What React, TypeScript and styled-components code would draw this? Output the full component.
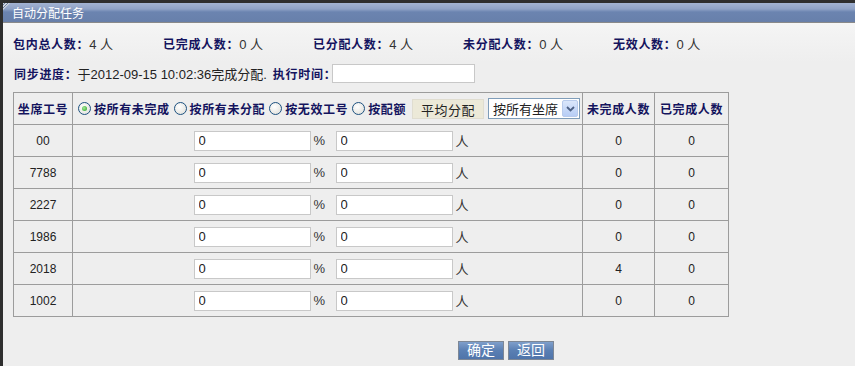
import React from "react";
import styled, { createGlobalStyle } from "styled-components";

const Global = createGlobalStyle`
  html, body { margin: 0; padding: 0; background: #2e2e2e; }
  body { font-family: "Liberation Sans", "Noto Sans CJK SC", sans-serif; font-size: 12px; color: #222; }
  * { box-sizing: border-box; }
`;

const Frame = styled.div`
  width: 855px;
  height: 366px;
  padding: 3px 0 0 3px;
  background: #2e2e2e;
  overflow: hidden;
`;

const Dialog = styled.div`
  height: 363px;
  display: flex;
  flex-direction: column;
  background: linear-gradient(#fcfcfc 0px, #f3f3f3 30px, #eeeeee 60px, #eeeeee 100%);
`;

const TitleBar = styled.div`
  position: relative;
  height: 20px;
  flex: none;
  display: flex;
  align-items: center;
  padding-left: 9px;
  color: #fff;
  font-size: 12px;
  background: linear-gradient(#a3b3d2 0px, #8fa2c6 6px, #6b84b0 9px, #6880ab 18px, #6b7fa3 20px);
  border-bottom: 1px solid #8a8a8a;
  &::before {
    content: "";
    position: absolute;
    left: 0;
    top: 0;
    width: 7px;
    height: 7px;
    background: repeating-linear-gradient(135deg, #d0d6e0 0 1px, #6e7f9e 1px 2px);
    clip-path: polygon(0 0, 100% 0, 0 100%);
  }
`;

const Body = styled.div`
  padding: 0 0 0 10px;
  display: flex;
  flex-direction: column;
`;

const StatRow = styled.div`
  display: flex;
  height: 38px;
  align-items: center;
  padding-top: 2px;
`;

const Stat = styled.div`
  width: 150px;
  flex: none;
  white-space: nowrap;
  font-size: 13px;
  color: #333;
`;

const Label = styled.span`
  font-weight: bold;
  font-size: 12px;
  letter-spacing: 0.7px;
  color: #14145e;
`;

const SyncRow = styled.div`
  display: flex;
  align-items: center;
  height: 24px;
  white-space: nowrap;
  font-size: 13px;
  color: #222;
`;

const SyncLabel = styled(Label)`
  margin-left: 1px;
`;

const TimeLabel = styled(Label)`
  margin-left: 6px;
`;

const TimeInput = styled.input`
  width: 143px;
  height: 19px;
  margin-left: -4px;
  border: 1px solid #c8c8c8;
  background: #fff;
  padding: 0 3px;
  font: inherit;
`;

const Grid = styled.table`
  margin-top: 7px;
  border-collapse: collapse;
  width: 715px;
  table-layout: fixed;
  font-size: 12px;
`;

const Th = styled.th<{ $align?: string }>`
  height: 32px;
  border: 1px solid #9c9c9c;
  font-weight: bold;
  letter-spacing: 0.6px;
  color: #14145e;
  text-align: ${(p) => p.$align || "center"};
  padding: 0 1px;
  white-space: nowrap;
`;

const Td = styled.td`
  height: 32px;
  border: 1px solid #9c9c9c;
  text-align: center;
  color: #222;
  padding: 0;
`;

const Controls = styled.div`
  display: flex;
  align-items: center;
  padding-left: 1px;
`;

const Radio = styled.span<{ $checked?: boolean }>`
  width: 13px;
  height: 13px;
  border-radius: 50%;
  border: 1px solid #1c5180;
  background: radial-gradient(circle at 40% 35%, #ffffff, #dcdcd6);
  display: inline-flex;
  align-items: center;
  justify-content: center;
  margin-right: 3px;
  margin-left: 3px;
  flex: none;
  &::after {
    content: "";
    width: 5px;
    height: 5px;
    border-radius: 50%;
    background: ${(p) => (p.$checked ? "radial-gradient(circle at 40% 40%, #a6e89a, #21a121)" : "transparent")};
  }
`;

const RadioText = styled.span`
  margin-right: 1px;
`;

const AvgButton = styled.button`
  margin-left: 5px;
  width: 72px;
  height: 20px;
  border: 1px solid #e0ddd0;
  background: #ece9d8;
  font: inherit;
  font-weight: normal;
  letter-spacing: 0.5px;
  font-size: 13px;
  color: #222;
  padding: 0;
`;

const SelectBox = styled.div`
  margin-left: 4px;
  width: 92px;
  height: 21px;
  border: 1px solid #7f9db9;
  background: #fff;
  display: flex;
  align-items: center;
  font-weight: normal;
  font-size: 13px;
  letter-spacing: 0;
  color: #222;
  padding-left: 4px;
`;

const SelectText = styled.span`
  flex: 1;
  text-align: left;
`;

const Arrow = styled.span`
  width: 16px;
  height: 17px;
  margin-right: 1px;
  background: linear-gradient(#dbe7fb, #b7cdf5);
  border: 1px solid #b8cbec;
  border-radius: 2px;
  display: flex;
  align-items: center;
  justify-content: center;
`;

const AllocCell = styled.div`
  display: flex;
  align-items: center;
  justify-content: center;
  padding-left: 7px;
`;

const NumInput = styled.input`
  width: 117px;
  height: 20px;
  border: 1px solid #c8c8c8;
  background: #fff;
  padding: 0 4px;
  font: inherit;
  font-size: 13px;
  color: #222;
`;

const Unit = styled.span<{ $w: number }>`
  width: ${(p) => p.$w}px;
  text-align: left;
  padding-left: 3px;
  font-size: 13px;
  color: #333;
`;

const Footer = styled.div`
  display: flex;
  gap: 4px;
  padding-left: 445px;
  margin-top: 24px;
`;

const BlueButton = styled.button`
  width: 46px;
  height: 19px;
  border: 1px solid #7d8795;
  background: linear-gradient(#7f9fcb, #5a7fb3 50%, #4f74aa);
  color: #fff;
  font: inherit;
  font-size: 14px;
  padding: 0;
  line-height: 17px;
`;

const rows = [
  { id: "00", un: 0, done: 0 },
  { id: "7788", un: 0, done: 0 },
  { id: "2227", un: 0, done: 0 },
  { id: "1986", un: 0, done: 0 },
  { id: "2018", un: 4, done: 0 },
  { id: "1002", un: 0, done: 0 },
];

export default function App() {
  return (
    <Frame>
      <Global />
      <Dialog>
        <TitleBar>自动分配任务</TitleBar>
        <Body>
          <StatRow>
            <Stat><Label>包内总人数：</Label>4 人</Stat>
            <Stat><Label>已完成人数：</Label>0 人</Stat>
            <Stat><Label>已分配人数：</Label>4 人</Stat>
            <Stat><Label>未分配人数：</Label>0 人</Stat>
            <Stat><Label>无效人数：</Label>0 人</Stat>
          </StatRow>
          <SyncRow>
            <SyncLabel>同步进度：</SyncLabel>
            <span>于2012-09-15 10:02:36完成分配.</span>
            <TimeLabel>执行时间：</TimeLabel>
            <TimeInput defaultValue="" />
          </SyncRow>
          <Grid>
            <colgroup>
              <col style={{ width: 59 }} />
              <col style={{ width: 510 }} />
              <col style={{ width: 72 }} />
              <col style={{ width: 74 }} />
            </colgroup>
            <thead>
              <tr>
                <Th>坐席工号</Th>
                <Th $align="left">
                  <Controls>
                    <Radio $checked />
                    <RadioText>按所有未完成</RadioText>
                    <Radio />
                    <RadioText>按所有未分配</RadioText>
                    <Radio />
                    <RadioText>按无效工号</RadioText>
                    <Radio />
                    <RadioText>按配额</RadioText>
                    <AvgButton>平均分配</AvgButton>
                    <SelectBox>
                      <SelectText>按所有坐席</SelectText>
                      <Arrow>
                        <svg width="9" height="6" viewBox="0 0 9 6">
                          <path d="M1 1 L4.5 4.5 L8 1" stroke="#4d6185" strokeWidth="1.8" fill="none" />
                        </svg>
                      </Arrow>
                    </SelectBox>
                  </Controls>
                </Th>
                <Th>未完成人数</Th>
                <Th>已完成人数</Th>
              </tr>
            </thead>
            <tbody>
              {rows.map((r) => (
                <tr key={r.id}>
                  <Td>{r.id}</Td>
                  <Td>
                    <AllocCell>
                      <NumInput defaultValue="0" />
                      <Unit $w={25}>%</Unit>
                      <NumInput defaultValue="0" />
                      <Unit $w={16}>人</Unit>
                    </AllocCell>
                  </Td>
                  <Td>{r.un}</Td>
                  <Td>{r.done}</Td>
                </tr>
              ))}
            </tbody>
          </Grid>
          <Footer>
            <BlueButton>确定</BlueButton>
            <BlueButton>返回</BlueButton>
          </Footer>
        </Body>
      </Dialog>
    </Frame>
  );
}
